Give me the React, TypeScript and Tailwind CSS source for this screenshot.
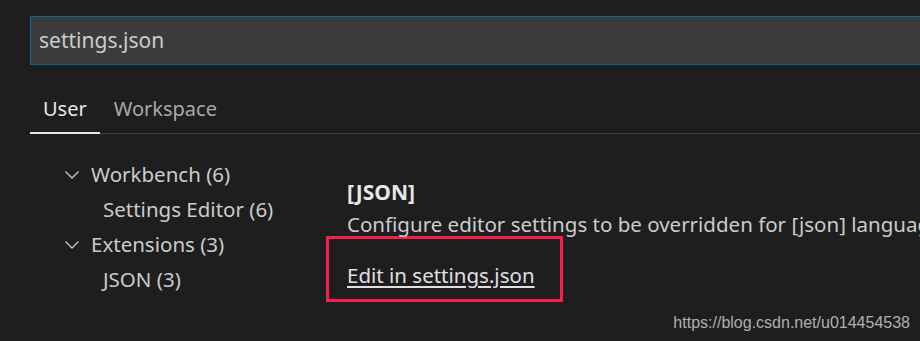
import React from "react";

function Chevron() {
  return (
    <svg width="16" height="10" viewBox="0 0 16 10" className="shrink-0">
      <path d="M1.5 1.5 L8 8 L14.5 1.5" fill="none" stroke="#c5c5c5" strokeWidth="1.3" />
    </svg>
  );
}

export default function App() {
  return (
    <div className="relative w-[920px] h-[341px] overflow-hidden bg-[#1e1e1e] font-['Noto_Sans',sans-serif] text-[#cccccc]">
      <div className="pl-[30px] pt-[16px]">
        <div className="h-[49px] border border-r-0 border-[#0e639c] bg-[#3c3c3c] pl-[8px] flex items-center text-[21px] text-[#cccccc]">
          settings.json
        </div>
        <div className="mt-[20px] flex h-[49px] border-b border-[#3f3f3f] text-[20px]">
          <div className="px-[13px] flex items-center border-b-2 border-[#e7e7e7] -mb-[1px] text-[#e7e7e7]">User</div>
          <div className="px-[14px] flex items-center text-[#a9a9a9]">Workspace</div>
        </div>
        <div className="flex">
          <div className="w-[296px] pt-[23px] pl-[34px] text-[20.5px]">
            <div className="h-[35px] flex items-center gap-[11px]">
              <Chevron />
              <span>Workbench (6)</span>
            </div>
            <div className="h-[35px] flex items-center pl-[39px]">Settings Editor (6)</div>
            <div className="h-[35px] flex items-center gap-[11px]">
              <Chevron />
              <span>Extensions (3)</span>
            </div>
            <div className="h-[35px] flex items-center pl-[39px]">JSON (3)</div>
          </div>
          <div className="flex-1 min-w-0 pt-[46px] text-[20.5px]">
            <div className="pl-[21px] h-[26px] flex items-center font-bold text-[21px] text-[#e7e7e7]">[JSON]</div>
            <div className="pl-[21px] mt-[6px] h-[24px] flex items-center whitespace-nowrap">
              Configure editor settings to be overridden for [json] language.
            </div>
            <div className="w-[237px] h-[66px] border-[3px] border-[#f5204d] pl-[18px] pt-[21px]">
              <span className="underline underline-offset-[3px] text-[#e0e0e0]">Edit in settings.json</span>
            </div>
          </div>
        </div>
      </div>
      <div className="absolute right-[10px] bottom-[6px] font-['Liberation_Sans',Arial,sans-serif] text-[16px] text-[#b0b0b0]">
        https://blog.csdn.net/u014454538
      </div>
    </div>
  );
}
